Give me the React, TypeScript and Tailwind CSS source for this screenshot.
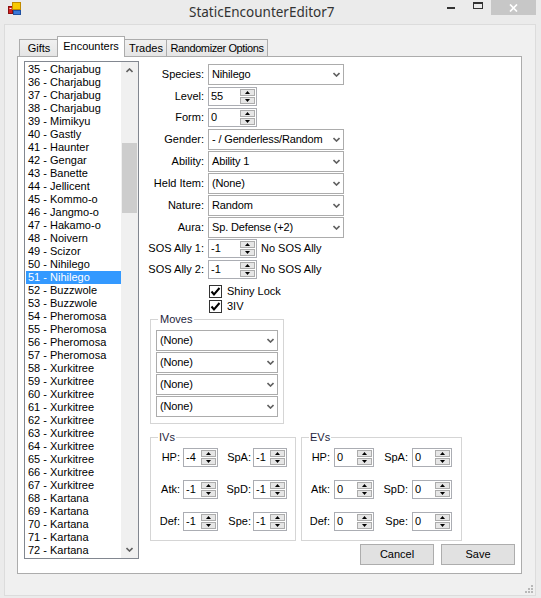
import React from 'react'

const items = [
  '35 - Charjabug', '36 - Charjabug', '37 - Charjabug', '38 - Charjabug', '39 - Mimikyu',
  '40 - Gastly', '41 - Haunter', '42 - Gengar', '43 - Banette', '44 - Jellicent',
  '45 - Kommo-o', '46 - Jangmo-o', '47 - Hakamo-o', '48 - Noivern', '49 - Scizor',
  '50 - Nihilego', '51 - Nihilego', '52 - Buzzwole', '53 - Buzzwole', '54 - Pheromosa',
  '55 - Pheromosa', '56 - Pheromosa', '57 - Pheromosa', '58 - Xurkitree', '59 - Xurkitree',
  '60 - Xurkitree', '61 - Xurkitree', '62 - Xurkitree', '63 - Xurkitree', '64 - Xurkitree',
  '65 - Xurkitree', '66 - Xurkitree', '67 - Xurkitree', '68 - Kartana', '69 - Kartana',
  '70 - Kartana', '71 - Kartana', '72 - Kartana',
]

function Chevron({ up = false }: { up?: boolean }) {
  return (
    <svg width="7" height="5" viewBox="0 0 7 5">
      <polyline
        points={up ? '0.5,4 3.5,1 6.5,4' : '0.5,1 3.5,4 6.5,1'}
        fill="none"
        stroke="#606060"
        strokeWidth="1.6"
      />
    </svg>
  )
}

function Combo({ value, w = 'w-[136px]' }: { value: string; w?: string }) {
  return (
    <div className={`flex h-[21px] items-center border border-[#acacac] bg-white ${w}`}>
      <span className="flex-1 overflow-hidden pl-[3px] whitespace-nowrap tracking-[-0.15px]">{value}</span>
      <span className="ml-[2px] mr-[3px] flex">
        <Chevron />
      </span>
    </div>
  )
}

function Tri({ up }: { up?: boolean }) {
  return (
    <svg width="5" height="3" viewBox="0 0 5 3">
      <polygon points={up ? '0,3 2.5,0 5,3' : '0,0 5,0 2.5,3'} fill="#000" />
    </svg>
  )
}

function Spin() {
  return (
    <div className="m-[1px] flex w-[15px] flex-col gap-[1px]">
      <div className="flex flex-1 items-center justify-center border border-[#acacac] bg-[#e6e6e6]">
        <Tri up />
      </div>
      <div className="flex flex-1 items-center justify-center border border-[#acacac] bg-[#e6e6e6]">
        <Tri />
      </div>
    </div>
  )
}

function Num({ value, w }: { value: string; w: string }) {
  return (
    <div className={`flex h-[19px] border border-[#abadb3] bg-white ${w}`}>
      <span className="flex-1 pl-[2px] leading-[17px]">{value}</span>
      <Spin />
    </div>
  )
}

function Row({ label, className = '', children }: { label: string; className?: string; children: React.ReactNode }) {
  return (
    <div className={`flex items-center ${className}`}>
      <span className="w-[65px] text-right whitespace-nowrap">{label}</span>
      <div className="ml-[4px] flex items-center">{children}</div>
    </div>
  )
}

function Check({ label, className = '' }: { label: string; className?: string }) {
  return (
    <div className={`ml-[70px] flex h-[14px] items-center ${className}`}>
      <div className="flex h-[13px] w-[13px] items-center justify-center border border-[#333] bg-white">
        <svg width="11" height="11" viewBox="0 0 11 11">
          <path d="M1.5 5.5 L4 8.5 L9.5 2" fill="none" stroke="#000" strokeWidth="2" />
        </svg>
      </div>
      <span className="ml-[5px]">{label}</span>
    </div>
  )
}

function Stat({ a, av, b, bv, kind }: { a: string; av: string; b: string; bv: string; kind: 'iv' | 'ev' }) {
  if (kind === 'iv') {
    return (
      <div className="flex items-center">
        <span className="w-[29px] text-right">{a}</span>
        <div className="ml-[3px]"><Num value={av} w="w-[35px]" /></div>
        <span className="w-[33px] text-right">{b}</span>
        <div className="ml-[2px]"><Num value={bv} w="w-[34px]" /></div>
      </div>
    )
  }
  return (
    <div className="flex items-center">
      <span className="w-[28px] text-right">{a}</span>
      <div className="ml-[4px]"><Num value={av} w="w-[40px]" /></div>
      <span className="w-[34px] text-right">{b}</span>
      <div className="ml-[4px]"><Num value={bv} w="w-[40px]" /></div>
    </div>
  )
}

function TitleBar() {
  return (
    <div className="flex h-[24px] shrink-0 items-start">
      <svg className="ml-[8px] mt-[2px]" width="14" height="14" viewBox="0 0 14 14">
        <rect x="0.5" y="4.5" width="4" height="7" fill="#d32020" stroke="#8a1010" />
        <rect x="1.5" y="6" width="2" height="1" fill="#fff" />
        <rect x="4.5" y="0.5" width="8" height="7" fill="#f8c800" stroke="#c08a00" />
        <rect x="5.5" y="8.5" width="7" height="4" fill="#3a78d8" stroke="#2050a0" />
      </svg>
      <span className="ml-[167px] mt-[3px] font-['Noto_Sans',sans-serif] text-[13.5px] leading-[18px] text-[#333]">
        StaticEncounterEditor7
      </span>
      <div className="ml-auto flex items-start">
        <div className="mt-[7px] h-[2px] w-[8px] bg-[#333]" />
        <div className="ml-[18px] mt-[2px] h-[7px] w-[10px] border border-t-2 border-[#333]" />
        <div className="ml-[8px] flex h-[15px] w-[45px] items-center justify-center bg-[#c7c7c7]">
          <svg width="9" height="8" viewBox="0 0 9 8">
            <path d="M1 0.5 L8 7.5 M8 0.5 L1 7.5" stroke="#fff" strokeWidth="1.7" />
          </svg>
        </div>
        <div className="w-[5px]" />
      </div>
    </div>
  )
}

export default function App() {
  return (
    <div className="flex h-[598px] w-[541px] flex-col bg-[#ebebeb] font-['Liberation_Sans',Arial,sans-serif] text-[11px] leading-[13px] text-black">
      <TitleBar />
      <div className="relative mb-[2px] ml-[4px] mr-[5px] flex flex-1 flex-col border border-[#dcdcdc] bg-[#f0f0f0]">
        <div className="ml-[12px] mt-[11px] flex flex-col">
          {/* tabs */}
          <div className="flex h-[20px] items-end pl-[2px] whitespace-nowrap">
            <div className="flex h-[17px] w-[40px] items-center justify-center border border-b-0 border-[#acacac] bg-gradient-to-b from-[#f0f0f0] to-[#e5e5e5]">
              Gifts
            </div>
            <div className="relative z-10 -mb-[1px] -ml-[2px] flex h-[21px] w-[68px] items-center justify-center border border-b-0 border-[#acacac] bg-white pb-[2px]">
              Encounters
            </div>
            <div className="-ml-[2px] flex h-[17px] w-[44px] items-center justify-center border border-b-0 border-[#acacac] bg-gradient-to-b from-[#f0f0f0] to-[#e5e5e5] pl-[2px]">
              Trades
            </div>
            <div className="-ml-[1px] flex h-[17px] w-[102px] items-center justify-center border border-b-0 border-[#acacac] bg-gradient-to-b from-[#f0f0f0] to-[#e5e5e5] tracking-[-0.4px]">
              Randomizer Options
            </div>
          </div>

          {/* tab page */}
          <div className="flex h-[518px] w-[505px] border border-[#acacac] bg-white">
            {/* list box */}
            <div className="ml-[6px] mt-[4px] flex h-[498px] w-[115px] border border-[#828790] bg-white">
              <div className="flex-1 overflow-hidden pl-[1px] pt-[1px]">
                {items.map((it) => (
                  <div
                    key={it}
                    className={`h-[13px] whitespace-nowrap pl-[2px] leading-[13px] ${
                      it === '51 - Nihilego' ? 'bg-[#3399ff] text-white' : ''
                    }`}
                  >
                    {it}
                  </div>
                ))}
              </div>
              <div className="flex w-[17px] flex-col bg-[#f0f0f0]">
                <div className="flex h-[17px] items-center justify-center">
                  <Chevron up />
                </div>
                <div className="flex flex-1 flex-col px-[1px]">
                  <div className="h-[64px]" />
                  <div className="h-[70px] bg-[#cdcdcd]" />
                </div>
                <div className="flex h-[17px] items-center justify-center">
                  <Chevron />
                </div>
              </div>
            </div>

            {/* editor column */}
            <div className="flex flex-1 flex-col pt-[7px]">
              <Row label="Species:"><Combo value="Nihilego" /></Row>
              <Row label="Level:" className="mt-[2px]"><Num value="55" w="w-[49px]" /></Row>
              <Row label="Form:" className="mt-[2px]"><Num value="0" w="w-[49px]" /></Row>
              <Row label="Gender:" className="mt-[2px]"><Combo value="- / Genderless/Random" /></Row>
              <Row label="Ability:" className="mt-[1px]"><Combo value="Ability 1" /></Row>
              <Row label="Held Item:" className="mt-[1px]"><Combo value="(None)" /></Row>
              <Row label="Nature:" className="mt-[1px]"><Combo value="Random" /></Row>
              <Row label="Aura:" className="mt-[1px]"><Combo value="Sp. Defense (+2)" /></Row>
              <Row label="SOS Ally 1:" className="mt-[1px]">
                <Num value="-1" w="w-[49px]" />
                <span className="ml-[4px]">No SOS Ally</span>
              </Row>
              <Row label="SOS Ally 2:" className="mt-[2px]">
                <Num value="-1" w="w-[49px]" />
                <span className="ml-[4px]">No SOS Ally</span>
              </Row>
              <Check label="Shiny Lock" className="mt-[5px]" />
              <Check label="3IV" className="mt-[1px]" />

              <fieldset className="ml-[11px] h-[111px] w-[134px] border border-[#d5d5d5]">
                <legend className="ml-[7px] px-[2px] leading-[13px] text-[#1e1e3c]">Moves</legend>
                <div className="ml-[5px] mt-[4px] flex flex-col gap-[1px]">
                  <Combo value="(None)" w="w-[122px]" />
                  <Combo value="(None)" w="w-[122px]" />
                  <Combo value="(None)" w="w-[122px]" />
                  <Combo value="(None)" w="w-[122px]" />
                </div>
              </fieldset>

              <div className="ml-[11px] mt-[7px] flex gap-[5px]">
                <fieldset className="h-[110px] w-[146px] border border-[#d5d5d5]">
                  <legend className="ml-[7px] px-[1px] leading-[13px] text-[#1e1e3c]">IVs</legend>
                  <div className="mt-[4px] flex flex-col gap-[13px]">
                    <Stat kind="iv" a="HP:" av="-4" b="SpA:" bv="-1" />
                    <Stat kind="iv" a="Atk:" av="-1" b="SpD:" bv="-1" />
                    <Stat kind="iv" a="Def:" av="-1" b="Spe:" bv="-1" />
                  </div>
                </fieldset>
                <fieldset className="h-[110px] w-[161px] border border-[#d5d5d5]">
                  <legend className="ml-[7px] px-[1px] leading-[13px] text-[#1e1e3c]">EVs</legend>
                  <div className="mt-[4px] flex flex-col gap-[13px]">
                    <Stat kind="ev" a="HP:" av="0" b="SpA:" bv="0" />
                    <Stat kind="ev" a="Atk:" av="0" b="SpD:" bv="0" />
                    <Stat kind="ev" a="Def:" av="0" b="Spe:" bv="0" />
                  </div>
                </fieldset>
              </div>

              <div className="mt-[3px] flex justify-end gap-[7px] pr-[6px]">
                <button className="h-[21px] w-[74px] border border-[#adadad] bg-[#e1e1e1]">Cancel</button>
                <button className="h-[21px] w-[74px] border border-[#adadad] bg-[#e1e1e1]">Save</button>
              </div>
            </div>
          </div>
        </div>

        {/* size grip */}
        <svg className="absolute bottom-[1px] right-[1px]" width="10" height="10" viewBox="0 0 10 10">
          <rect x="7" y="1" width="2" height="2" fill="#b8b8b8" />
          <rect x="4" y="4" width="2" height="2" fill="#b8b8b8" />
          <rect x="7" y="4" width="2" height="2" fill="#b8b8b8" />
          <rect x="1" y="7" width="2" height="2" fill="#b8b8b8" />
          <rect x="4" y="7" width="2" height="2" fill="#b8b8b8" />
          <rect x="7" y="7" width="2" height="2" fill="#b8b8b8" />
        </svg>
      </div>
    </div>
  )
}
